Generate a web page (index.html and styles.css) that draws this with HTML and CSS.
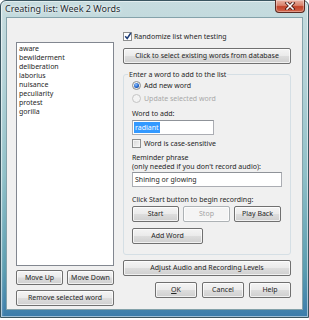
FILE: index.html
```html
<!DOCTYPE html>
<html>
<head>
<meta charset="utf-8">
<link rel="stylesheet" href="styles.css">
</head>
<body>
<div class="window">
  <div class="titlebar">
    <span class="title">Creating list: Week 2 Words</span>
    <span class="close">
      <svg width="12" height="8" viewBox="0 0 12 8"><path d="M3 1 L9 7 M9 1 L3 7" stroke="#4a1a14" stroke-width="3.2" stroke-linecap="square"/><path d="M3 1 L9 7 M9 1 L3 7" stroke="#ffffff" stroke-width="1.6" stroke-linecap="square"/></svg>
    </span>
  </div>
  <div class="client">
    <div class="left">
      <div class="listbox">
        <div>aware</div>
        <div>bewilderment</div>
        <div>deliberation</div>
        <div>laborius</div>
        <div>nuisance</div>
        <div>peculiarity</div>
        <div>protest</div>
        <div>gorilla</div>
      </div>
      <div class="pair">
        <button class="btn">Move Up</button>
        <button class="btn">Move Down</button>
      </div>
      <button class="btn wide remove">Remove selected word</button>
    </div>
    <div class="right">
      <div class="check-row top-check">
        <span class="checkbox checked">
          <svg width="8" height="8" viewBox="0 0 8 8"><path d="M1.2 4.2 L3.2 6.5 L6.8 1" stroke="#1d3d78" stroke-width="1.5" fill="none"/></svg>
        </span>
        <span>Randomize list when testing</span>
      </div>
      <button class="btn wide db">Click to select existing words from database</button>
      <div class="group">
        <div class="group-title">Enter a word to add to the list</div>
        <div class="radio-row">
          <span class="radio on"><span class="dot"></span></span>
          <span>Add new word</span>
        </div>
        <div class="radio-row disabled">
          <span class="radio"></span>
          <span>Update selected word</span>
        </div>
        <div class="label word-label">Word to add:</div>
        <div class="textbox short"><span class="sel">radiant</span></div>
        <div class="check-row case">
          <span class="checkbox"></span>
          <span>Word is case-sensitive</span>
        </div>
        <div class="label reminder">Reminder phrase<br>(only needed if you don't record audio):</div>
        <div class="textbox long">Shining or glowing</div>
        <div class="label rec">Click Start button to begin recording:</div>
        <div class="rec-row">
          <button class="btn">Start</button>
          <button class="btn" disabled>Stop</button>
          <button class="btn">Play Back</button>
        </div>
        <button class="btn addword">Add Word</button>
      </div>
      <button class="btn wide adjust">Adjust Audio and Recording Levels</button>
      <div class="dialog-buttons">
        <button class="btn"><u>O</u>K</button>
        <button class="btn">Cancel</button>
        <button class="btn">Help</button>
      </div>
    </div>
  </div>
</div>
</body>
</html>
```

FILE: styles.css
```css
* { box-sizing: border-box; }
html, body {
  margin: 0;
  padding: 0;
  background: #ffffff;
}
body {
  width: 309px;
  height: 320px;
  overflow: hidden;
  font-family: "Noto Sans", "Open Sans", sans-serif;
  font-size: 7px;
  color: #262626;
}
.window {
  width: 309px;
  height: 318px;
  border: 1px solid #3a5560;
  border-radius: 6px 6px 0 0;
  background:
    linear-gradient(90deg, rgba(255,255,255,0.25) 0px, rgba(255,255,255,0) 3px, rgba(0,0,0,0) 306px, rgba(255,255,255,0.2) 309px),
    linear-gradient(180deg, #c7dcdf 0%, #b3d2d7 25%, #8fc0c8 55%, #5b9db0 85%, #3c7cab 100%);
  display: flex;
  flex-direction: column;
  box-shadow: inset 0 0 0 1px rgba(255,255,255,0.5);
}
.titlebar {
  height: 16px;
  display: flex;
  justify-content: space-between;
  align-items: flex-start;
  padding-left: 4px;
  padding-right: 3px;
}
.title {
  font-size: 9px;
  line-height: 16px;
  color: #1e2c32;
  text-shadow: 0 0 4px #ffffff, 0 0 2px #ffffff;
}
.close {
  width: 30px;
  height: 13px;
  margin-top: -1px;
  border: 1px solid #5a2a22;
  border-top: none;
  border-radius: 0 0 4px 4px;
  background: linear-gradient(180deg, #e9b3a5 0%, #d9826c 45%, #c2432a 55%, #d2654a 100%);
  box-shadow: inset 0 0 0 1px rgba(255,255,255,0.35);
  display: flex;
  align-items: center;
  justify-content: center;
}
.client {
  flex: 1;
  margin: 0 5px 7px 5px;
  border: 1px solid #84a2aa;
  background: #f0f0f0;
  display: flex;
  padding: 0 11px 0 9px;
  gap: 9px;
}
.left {
  width: 98px;
  display: flex;
  flex-direction: column;
}
.listbox {
  margin-top: 24px;
  height: 224px;
  background: #ffffff;
  border: 1px solid #828790;
  padding: 1px 2px 0 2px;
  line-height: 9px;
}
.pair {
  margin-top: 4px;
  display: grid;
  grid-template-columns: 1fr 1fr;
  gap: 4px;
}
.btn {
  font-family: inherit;
  font-size: 7px;
  color: #262626;
  height: 16px;
  padding: 0;
  border: 1px solid #707070;
  border-radius: 2px;
  background: linear-gradient(180deg, #f4f4f4 0%, #ebebeb 48%, #dddddd 52%, #cfcfcf 100%);
  box-shadow: inset 0 0 0 1px rgba(255,255,255,0.7);
  line-height: 14px;
  text-align: center;
}
.btn[disabled] {
  color: #a3a3a3;
  border-color: #adb2b5;
  background: #f4f4f4;
}
.pair .btn { height: 15px; line-height: 13px; }
.wide { width: 100%; display: block; }
.remove { margin-top: 5px; }
.right {
  width: 168px;
  display: flex;
  flex-direction: column;
}
.check-row, .radio-row {
  display: flex;
  align-items: center;
  gap: 2px;
}
.radio-row { gap: 3px; }
.top-check {
  margin-top: 12px;
  height: 12px;
}
.checkbox {
  width: 9px;
  height: 9px;
  border: 1px solid #8e8f8f;
  background: linear-gradient(135deg, #d6d6d6 0%, #f7f7f7 100%);
  box-shadow: inset 0 0 0 1px #f4f4f4;
  display: inline-flex;
  align-items: center;
  justify-content: center;
  flex: none;
}
.checkbox svg { flex: none; }
.checkbox.checked {
  background: #ffffff;
  box-shadow: none;
}
.case .checkbox { margin-right: 1px; }
.db { margin-top: 6px; }
.group {
  margin-top: 10px;
  border: 1px solid #d5dfe5;
  border-radius: 3px;
  padding: 0 8px 10px 8px;
}
.group-title {
  margin-top: -5px;
  margin-left: -4px;
  height: 9px;
  line-height: 9px;
  padding: 0 1px;
  background: #f0f0f0;
  width: max-content;
}
.radio-row { height: 13px; }
.radio-row:first-of-type { margin-top: 3px; }
.radio {
  width: 9px;
  height: 9px;
  border-radius: 50%;
  border: 1px solid #8e8f8f;
  background: radial-gradient(circle at 40% 35%, #ffffff 0%, #e6e6e6 70%, #cfcfcf 100%);
  display: inline-flex;
  align-items: center;
  justify-content: center;
  flex: none;
}
.radio .dot {
  width: 5px;
  height: 5px;
  border-radius: 50%;
  background: radial-gradient(circle at 40% 35%, #8fc2ff 0%, #1b5dc4 60%, #0b2f6e 100%);
}
.disabled { color: #a8a8a8; }
.disabled .radio { border-color: #c4c4c4; background: #f3f3f3; }
.label { line-height: 12px; }
.word-label { margin-top: 3px; }
.textbox {
  height: 15px;
  background: #ffffff;
  border: 1px solid #abadb3;
  border-top-color: #8f9399;
  padding: 1px 1px;
  line-height: 11px;
}
.short { width: 82px; }
.long { width: 150px; padding-left: 2px; margin-top: 1px; }
.sel {
  background: #3399ff;
  color: #ffffff;
  display: inline-block;
  padding: 0 1px;
  line-height: 11px;
}
.case { margin-top: 2px; height: 12px; }
.reminder { line-height: 9px; margin-top: 4px; }
.rec { margin-top: 8px; line-height: 10px; }
.rec-row {
  margin-top: 1px;
  width: 149px;
  display: grid;
  grid-template-columns: 47px 47px 47px;
  gap: 4px;
}
.addword { margin-top: 6px; width: 71px; display: block; }
.adjust { margin-top: 5px; }
.dialog-buttons {
  margin-top: 6px;
  display: flex;
  justify-content: flex-end;
  gap: 5px;
}
.dialog-buttons .btn { width: 42px; }
```
